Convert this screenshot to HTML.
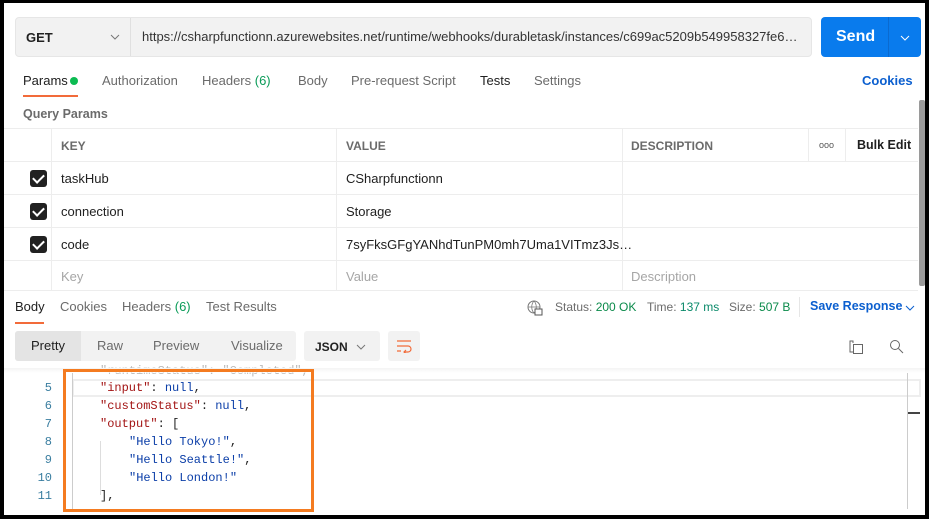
<!DOCTYPE html>
<html><head><style>
*{box-sizing:border-box;margin:0;padding:0}
body{width:929px;height:519px;background:#000;position:relative;overflow:hidden;font-family:"Liberation Sans",sans-serif;font-size:13px;color:#212121}
.page{position:absolute;left:4px;top:3px;width:921px;height:512px;background:#fff;overflow:hidden}
.a{position:absolute;white-space:nowrap}
.mono{font-family:"Liberation Mono",monospace;font-size:12px}
.s{color:#a31515}.k{color:#0b3ea8}
.ln{position:absolute;left:0;width:48px;text-align:right;color:#3a7ea0;font-family:"Liberation Mono",monospace;font-size:12px}
.hl{position:absolute;left:0;right:0;height:1px;background:#ededed}
.vl{position:absolute;top:126px;height:161px;width:1px;background:#ededed}
.cb{position:absolute;left:25px;width:17px;height:17px;background:#212121;border-radius:3px}
.cb:after{content:"";position:absolute;left:5px;top:2px;width:5px;height:9px;border:solid #fff;border-width:0 2.5px 2.5px 0;transform:rotate(45deg)}
</style></head><body><div class="page">
<div class="a" style="left:11px;top:14px;width:797px;height:40px;background:#f2f2f2;border:1px solid #e6e6e6;border-radius:4px"></div>
<div class="a" style="left:126px;top:15px;width:1px;height:38px;background:#e0e0e0"></div>
<div class="a" style="left:22px;top:27px;font-weight:bold;font-size:13px">GET</div>
<svg class="a" style="left:106px;top:30px" width="10" height="8"><path d="M1 2l4 4 4-4" stroke="#777" fill="none"/></svg>
<div class="a" style="left:138px;top:26px;font-size:13px;color:#333">https://csharpfunctionn.azurewebsites.net/runtime/webhooks/durabletask/instances/c699ac5209b549958327fe6…</div>
<div class="a" style="left:817px;top:14px;width:100px;height:40px;background:#097bed;border-radius:4px"></div>
<div class="a" style="left:884px;top:14px;width:1px;height:40px;background:#0a6ad0"></div>
<div class="a" style="left:832px;top:25px;color:#fff;font-weight:bold;font-size:16px">Send</div>
<svg class="a" style="left:896px;top:31px" width="10" height="8"><path d="M1 2l4 4 4-4" stroke="#fff" fill="none"/></svg>
<div class="a" style="left:19px;top:70px;color:#212121">Params</div>
<div class="a" style="left:66px;top:74px;width:8px;height:8px;border-radius:50%;background:#0cbb52"></div>
<div class="a" style="left:19px;top:92px;width:55px;height:2px;background:#f26b3a"></div>
<div class="a" style="left:98px;top:70px;color:#6b6b6b">Authorization</div>
<div class="a" style="left:198px;top:70px;color:#6b6b6b">Headers <span style="color:#0a9b58">(6)</span></div>
<div class="a" style="left:294px;top:70px;color:#6b6b6b">Body</div>
<div class="a" style="left:347px;top:70px;color:#6b6b6b">Pre-request Script</div>
<div class="a" style="left:476px;top:70px;color:#212121">Tests</div>
<div class="a" style="left:530px;top:70px;color:#6b6b6b">Settings</div>
<div class="a" style="left:858px;top:70px;color:#0b5fcf;font-weight:bold">Cookies</div>
<div class="a" style="left:19px;top:104px;color:#6b6b6b;font-weight:bold;font-size:12.5px">Query Params</div>
<div class="a" style="left:915px;top:97px;width:6px;height:186px;background:#9a9a9a;border-radius:2px"></div>
<div class="hl" style="top:125px;right:7px"></div>
<div class="hl" style="top:158px;right:7px"></div>
<div class="hl" style="top:191px;right:7px"></div>
<div class="hl" style="top:224px;right:7px"></div>
<div class="hl" style="top:257px;right:7px"></div>
<div class="hl" style="top:287px;right:7px"></div>
<div class="vl" style="left:47px"></div><div class="vl" style="left:332px"></div><div class="vl" style="left:618px"></div>
<div class="vl" style="left:804px;height:33px"></div><div class="vl" style="left:841px;height:33px"></div>
<div class="a" style="left:57px;top:136px;font-weight:bold;color:#6b6b6b;font-size:12px">KEY</div>
<div class="a" style="left:342px;top:136px;font-weight:bold;color:#6b6b6b;font-size:12px">VALUE</div>
<div class="a" style="left:627px;top:136px;font-weight:bold;color:#6b6b6b;font-size:12px">DESCRIPTION</div>
<div class="a" style="left:815px;top:137px;color:#555;font-size:9px">ooo</div>
<div class="a" style="left:853px;top:135px;font-weight:bold;font-size:12.5px">Bulk Edit</div>
<div class="cb" style="top:167px;left:26px"></div>
<div class="cb" style="top:200px;left:26px"></div>
<div class="cb" style="top:233px;left:26px"></div>
<div class="a" style="left:57px;top:168px">taskHub</div><div class="a" style="left:342px;top:168px">CSharpfunctionn</div>
<div class="a" style="left:57px;top:201px">connection</div><div class="a" style="left:342px;top:201px">Storage</div>
<div class="a" style="left:57px;top:234px">code</div><div class="a" style="left:342px;top:234px">7syFksGFgYANhdTunPM0mh7Uma1VITmz3Js…</div>
<div class="a" style="left:57px;top:266px;color:#a6a6a6">Key</div><div class="a" style="left:342px;top:266px;color:#a6a6a6">Value</div><div class="a" style="left:627px;top:266px;color:#a6a6a6">Description</div>
<div class="a" style="left:11px;top:296px">Body</div>
<div class="a" style="left:11px;top:319px;width:29px;height:2px;background:#f26b3a"></div>
<div class="a" style="left:56px;top:296px;color:#6b6b6b">Cookies</div>
<div class="a" style="left:118px;top:296px;color:#6b6b6b">Headers <span style="color:#0a9b58">(6)</span></div>
<div class="a" style="left:202px;top:296px;color:#6b6b6b">Test Results</div>
<svg class="a" style="left:523px;top:297px" width="16" height="16"><circle cx="7" cy="7" r="6" fill="none" stroke="#777"/><path d="M1 7h12M7 1c-3 3-3 9 0 12M7 1c3 3 3 9 0 12" stroke="#777" fill="none" stroke-width=".8"/><rect x="8" y="9" width="7" height="6" fill="#fff" stroke="#555"/></svg>
<div class="a" style="left:551px;top:297px;color:#6b6b6b;font-size:12px">Status: <span style="color:#0a8a4a">200 OK</span></div>
<div class="a" style="left:643px;top:297px;color:#6b6b6b;font-size:12px">Time: <span style="color:#0a8a6a">137 ms</span></div>
<div class="a" style="left:725px;top:297px;color:#6b6b6b;font-size:12px">Size: <span style="color:#0a8a4a">507 B</span></div>
<div class="a" style="left:795px;top:294px;width:1px;height:20px;background:#e6e6e6"></div>
<div class="a" style="left:806px;top:296px;color:#0b5fcf;font-weight:bold;font-size:12.5px">Save Response</div>
<svg class="a" style="left:901px;top:301px" width="10" height="8"><path d="M1 2l4 4 4-4" stroke="#0b5fcf" fill="none"/></svg>
<div class="a" style="left:11px;top:328px;width:281px;height:30px;background:#f2f2f2;border-radius:3px"></div>
<div class="a" style="left:11px;top:328px;width:66px;height:30px;background:#e4e4e4;border-radius:3px 0 0 3px"></div>
<div class="a" style="left:27px;top:335px">Pretty</div>
<div class="a" style="left:93px;top:335px;color:#6b6b6b">Raw</div>
<div class="a" style="left:149px;top:335px;color:#6b6b6b">Preview</div>
<div class="a" style="left:227px;top:335px;color:#6b6b6b">Visualize</div>
<div class="a" style="left:300px;top:328px;width:76px;height:30px;background:#f2f2f2;border-radius:3px"></div>
<div class="a" style="left:311px;top:337px;font-weight:bold;font-size:12px">JSON</div>
<svg class="a" style="left:352px;top:340px" width="10" height="8"><path d="M1 2l4 4 4-4" stroke="#777" fill="none"/></svg>
<div class="a" style="left:384px;top:328px;width:32px;height:30px;background:#f2f2f2;border-radius:3px"></div>
<svg class="a" style="left:392px;top:336px" width="16" height="14"><path d="M1 2h14M1 7h11a3 3 0 010 6H8M10 11l-2 2 2 2M1 12h4" stroke="#f26b3a" fill="none" stroke-width="1.2"/></svg>
<svg class="a" style="left:845px;top:337px" width="16" height="16"><path d="M4 3V1h-3v11h3" stroke="#666" fill="none"/><rect x="4.5" y="4.5" width="9" height="9" fill="none" stroke="#666"/></svg>
<svg class="a" style="left:885px;top:336px" width="16" height="16"><circle cx="6" cy="6" r="4.5" fill="none" stroke="#666"/><path d="M9.5 9.5l4.5 4.5" stroke="#666"/></svg>
<div class="a mono" style="left:96px;top:361px;color:#bbb"><span>"runtimeStatus": "Completed",</span></div>
<div class="a" style="left:0;top:365px;width:921px;height:5px;background:linear-gradient(#f4f4f4,rgba(255,255,255,.6))"></div>
<div class="a" style="left:68px;top:376px;width:849px;height:18px;border:2px solid #eeeeee"></div>
<div class="a" style="left:68px;top:370px;width:1px;height:136px;background:#ccc"></div>
<div class="a" style="left:96px;top:438px;width:1px;height:54px;background:#ddd"></div>
<div class="a" style="left:903px;top:370px;width:1px;height:136px;background:#ccc"></div>
<div class="a" style="left:904px;top:409px;width:12px;height:2px;background:#444"></div>
<div class="ln" style="top:378px">5</div><div class="ln" style="top:396px">6</div><div class="ln" style="top:414px">7</div><div class="ln" style="top:432px">8</div><div class="ln" style="top:450px">9</div><div class="ln" style="top:468px">10</div><div class="ln" style="top:486px">11</div>
<div class="a mono" style="left:96px;top:378px"><span class="s">"input"</span>: <span class="k">null</span>,</div>
<div class="a mono" style="left:96px;top:396px"><span class="s">"customStatus"</span>: <span class="k">null</span>,</div>
<div class="a mono" style="left:96px;top:414px"><span class="s">"output"</span>: [</div>
<div class="a mono k" style="left:125px;top:432px">"Hello Tokyo!"<span style="color:#212121">,</span></div>
<div class="a mono k" style="left:125px;top:450px">"Hello Seattle!"<span style="color:#212121">,</span></div>
<div class="a mono k" style="left:125px;top:468px">"Hello London!"</div>
<div class="a mono" style="left:96px;top:486px">],</div>
<div class="a" style="left:59px;top:366px;width:251px;height:143px;border:3px solid #f47b20"></div>
</div></body></html>
